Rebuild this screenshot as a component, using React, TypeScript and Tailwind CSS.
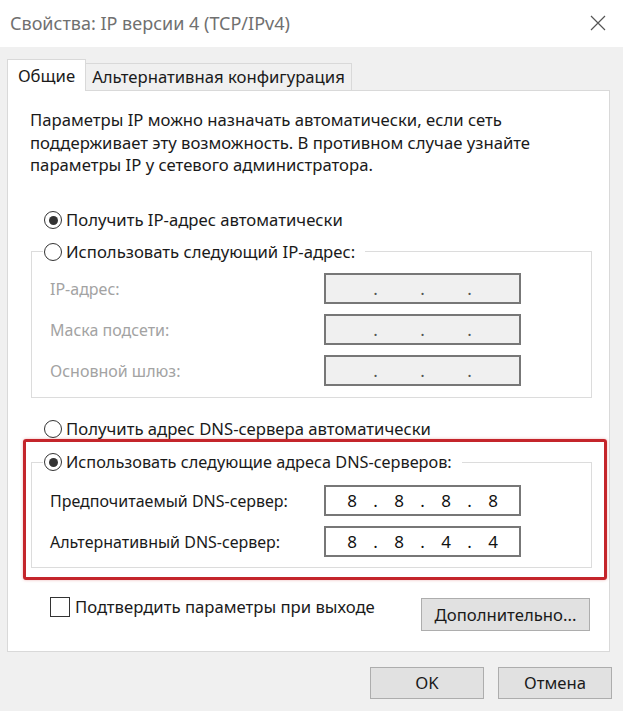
import React from "react";

function Radio({ checked }: { checked?: boolean }) {
  return (
    <span className="w-[18px] h-[18px] rounded-full border-[1.5px] border-[#333] bg-white flex items-center justify-center shrink-0">
      {checked ? <span className="w-[9px] h-[9px] rounded-full bg-[#333]" /> : null}
    </span>
  );
}

function IPBox({ values, disabled }: { values: string[]; disabled?: boolean }) {
  return (
    <div
      className={
        "w-[197px] h-[31px] border-2 border-[#777] flex items-center pl-[8px] text-[17px] " +
        (disabled ? "bg-[#f0f0f0] text-[#555]" : "bg-white text-[#111]")
      }
    >
      {values.map((v, i) => (
        <React.Fragment key={i}>
          <span className="w-[36px] text-center">{v}</span>
          {i < 3 ? <span className="w-[11px] text-center">.</span> : null}
        </React.Fragment>
      ))}
    </div>
  );
}

function Row({ label, values, disabled }: { label: string; values: string[]; disabled?: boolean }) {
  return (
    <div className="flex items-center">
      <span className={"ml-[18px] w-[274px] text-[16px] " + (disabled ? "text-[#a3a3a3]" : "text-[#1a1a1a]")}>
        {label}
      </span>
      <IPBox values={values} disabled={disabled} />
    </div>
  );
}

export default function App() {
  return (
    <div className="w-[623px] h-[711px] bg-[#f0f0f0] flex flex-col overflow-hidden [font-family:'Noto_Sans',sans-serif] text-[#1a1a1a]">
      {/* title bar */}
      <div className="h-[47px] bg-white flex items-center justify-between pl-[10px] pr-[17px] shrink-0">
        <span className="text-[18px] text-[#707070]">Свойства: IP версии 4 (TCP/IPv4)</span>
        <svg width="16" height="16" viewBox="0 0 16 16" className="mt-[-2px]">
          <path d="M1 1 L15 15 M15 1 L1 15" stroke="#555" strokeWidth="1.2" fill="none" />
        </svg>
      </div>

      <div className="px-[7px] pt-[12px] flex flex-col">
        {/* tabs */}
        <div className="flex items-end h-[31px] relative z-10">
          <div className="w-[79px] h-[32px] -mb-px bg-white border border-b-0 border-[#d9d9d9] flex items-center justify-center text-[16.7px]">
            Общие
          </div>
          <div className="w-[266px] h-[27px] bg-[#f0f0f0] border border-l-0 border-b-0 border-[#d9d9d9] flex items-center justify-center text-[16.7px]">
            Альтернативная конфигурация
          </div>
        </div>

        {/* panel */}
        <div className="w-[603px] h-[562px] bg-white border border-[#d9d9d9] flex flex-col">
          <p className="ml-[22px] mt-[18px] leading-[22.5px] text-[16.7px]">
            Параметры IP можно назначать автоматически, если сеть
            <br />
            поддерживает эту возможность. В противном случае узнайте
            <br />
            параметры IP у сетевого администратора.
          </p>

          <div className="mt-[31.5px] h-[24px] ml-[36px] flex items-center gap-[4px] text-[16.7px]">
            <Radio checked />
            <span>Получить IP-адрес автоматически</span>
          </div>

          <fieldset className="mt-[7.5px] ml-[23px] w-[561px] border border-[#dcdcdc] pb-[11px]">
            <legend className="ml-[11px] pl-[1px] pr-[10px]">
              <div className="h-[24px] flex items-center gap-[4px] text-[16.7px]">
                <Radio />
                <span>Использовать следующий IP-адрес:</span>
              </div>
            </legend>
            <div className="pt-[9.5px] flex flex-col gap-[10px]">
              <Row label="IP-адрес:" values={["", "", "", ""]} disabled />
              <Row label="Маска подсети:" values={["", "", "", ""]} disabled />
              <Row label="Основной шлюз:" values={["", "", "", ""]} disabled />
            </div>
          </fieldset>

          <div className="mt-[21px] h-[20px] ml-[36px] flex items-center gap-[4px] text-[16.7px]">
            <Radio />
            <span>Получить адрес DNS-сервера автоматически</span>
          </div>

          <div className="ml-[15px] w-[584px] border-[3px] border-[#c4252b] rounded-[3px] shadow-[0_0_3px_rgba(200,40,40,0.35)] flex flex-col">
            <fieldset className="mt-[8px] ml-[5px] mb-[9px] w-[561px] border border-[#dcdcdc] pb-[10px]">
              <legend className="ml-[11px] pl-[1px] pr-[10px]">
                <div className="h-[24px] flex items-center gap-[4px] text-[16.3px]">
                  <Radio checked />
                  <span>Использовать следующие адреса DNS-серверов:</span>
                </div>
              </legend>
              <div className="pt-[11px] flex flex-col gap-[10px]">
                <Row label="Предпочитаемый DNS-сервер:" values={["8", "8", "8", "8"]} />
                <Row label="Альтернативный DNS-сервер:" values={["8", "8", "4", "4"]} />
              </div>
            </fieldset>
          </div>

          <div className="mt-[15px] flex justify-between items-start">
            <div className="ml-[42px] h-[24px] flex items-center gap-[5px] text-[16.7px]">
              <span className="w-[20px] h-[20px] border-[1.5px] border-[#333] bg-white" />
              <span>Подтвердить параметры при выходе</span>
            </div>
            <button className="mt-[3px] mr-[19px] w-[169px] h-[33px] bg-[#e1e1e1] border border-[#adadad] text-[16.7px] text-[#1a1a1a] flex items-center justify-center">
              Дополнительно...
            </button>
          </div>
        </div>

        {/* bottom buttons */}
        <div className="mt-[15px] mr-[4px] flex justify-end gap-[14px]">
          <button className="w-[114px] h-[32px] bg-[#e1e1e1] border border-[#adadad] text-[16.7px] text-[#1a1a1a] flex items-center justify-center">
            OK
          </button>
          <button className="w-[114px] h-[32px] bg-[#e1e1e1] border border-[#adadad] text-[16.7px] text-[#1a1a1a] flex items-center justify-center">
            Отмена
          </button>
        </div>
      </div>
    </div>
  );
}
